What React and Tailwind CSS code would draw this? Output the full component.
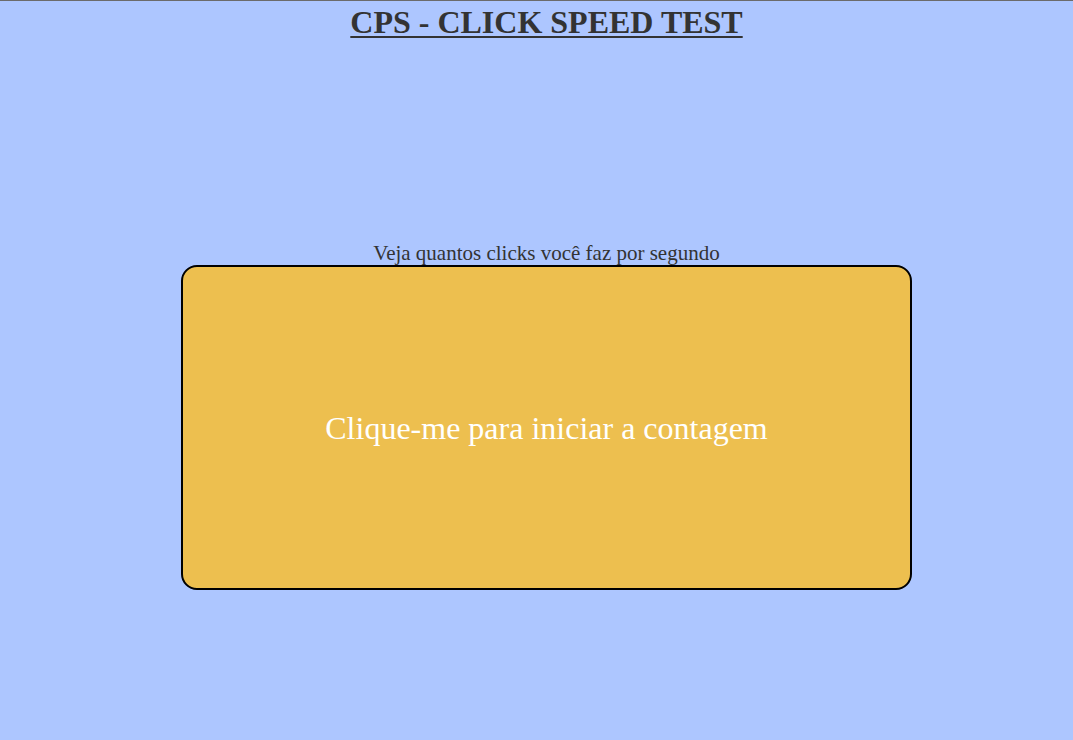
export default function App() {
    return (
        <div
            className="flex h-[740px] flex-col items-center border-t border-[#6b6b6b] bg-[#adc6ff] pl-5 text-[#333333]"
            style={{ fontFamily: '"Liberation Serif", "Times New Roman", serif' }}
        >
            {/* Title */}
            <h1 className="mt-[3px] text-[32px] font-bold leading-[37px] underline decoration-2 underline-offset-[3px]">
                CPS - CLICK SPEED TEST
            </h1>

            <p className="mt-[200px] text-[21px] leading-[24px]">Veja quantos clicks você faz por segundo</p>

            {/* Click area */}
            <button
                type="button"
                className="flex h-[325px] w-[731px] items-center justify-center rounded-2xl border-2 border-black bg-[#edbf4f] text-[32px] text-white"
                style={{ fontFamily: '"Liberation Serif", "Times New Roman", serif' }}
            >
                Clique-me para iniciar a contagem
            </button>
        </div>
    );
}
